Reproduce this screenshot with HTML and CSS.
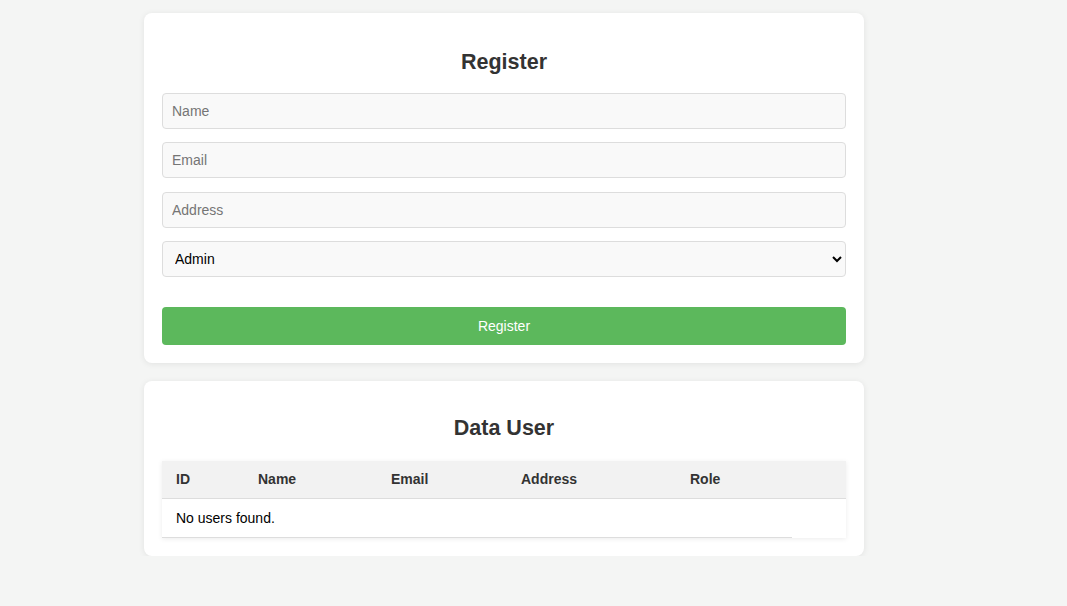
FILE: index.html
```html
<!DOCTYPE html>
<html lang="en">
<head>
<meta charset="utf-8">
<title>Register</title>
<link rel="stylesheet" href="styles.css">
</head>
<body>
<div class="container">
  <div class="card card-form">
    <h2 class="title">Register</h2>
    <form class="form">
      <input class="field" type="text" placeholder="Name">
      <input class="field" type="email" placeholder="Email">
      <input class="field" type="text" placeholder="Address">
      <select class="field select">
        <option>Admin</option>
        <option>User</option>
      </select>
      <button class="btn" type="button">Register</button>
    </form>
  </div>
  <div class="card card-table">
    <h2 class="title">Data User</h2>
    <table class="table">
      <thead>
        <tr>
          <th class="c-id">ID</th>
          <th class="c-name">Name</th>
          <th class="c-email">Email</th>
          <th class="c-addr">Address</th>
          <th class="c-role">Role</th>
          <th class="c-act"></th>
        </tr>
      </thead>
      <tbody>
        <tr>
          <td class="empty" colspan="5">No users found.</td>
          <td class="blank"></td>
        </tr>
      </tbody>
    </table>
  </div>
</div>
</body>
</html>
```

FILE: styles.css
```css
* { box-sizing: border-box; }
html, body { margin: 0; padding: 0; }
body {
  background: #f4f5f4;
  font-family: "Liberation Sans", Arial, sans-serif;
  color: #333;
}
.container {
  width: 720px;
  margin-left: 144px;
  padding-top: 13px;
  display: flex;
  flex-direction: column;
  gap: 18px;
}
.card {
  background: #fff;
  border-radius: 8px;
  box-shadow: 0 1px 6px rgba(0,0,0,0.08);
  padding: 35px 18px 18px;
}
.card-table { padding-top: 33px; }
.title {
  margin: 0 0 17px;
  font-size: 21.5px;
  line-height: 28px;
  font-weight: bold;
  text-align: center;
  color: #333;
}
.card-table .title { margin-bottom: 19px; }
.form { display: flex; flex-direction: column; }
.field {
  display: block;
  width: 100%;
  height: 36px;
  margin: 0 0 13.33px;
  padding: 0 9px;
  background: #f9f9f9;
  border: 1px solid #ddd;
  border-radius: 4px;
  font-family: "Liberation Sans", Arial, sans-serif;
  font-size: 14px;
  color: #000;
}
.field::placeholder { color: #757575; }
.select {
  margin-bottom: 30px;
  padding-left: 8px;
  color: #000;
}
.btn {
  display: block;
  width: 100%;
  height: 38px;
  background: #5cb85c;
  color: #fff;
  border: none;
  border-radius: 4px;
  font-family: "Liberation Sans", Arial, sans-serif;
  font-size: 14px;
}
.table {
  width: 100%;
  border-collapse: collapse;
  table-layout: fixed;
  box-shadow: 0 1px 5px rgba(0,0,0,0.08);
  font-size: 14px;
}
.table th {
  background: #f2f2f2;
  height: 38px;
  padding: 0 14px 2px;
  text-align: left;
  font-weight: bold;
  color: #333;
  border-bottom: 1px solid #ddd;
}
.table td {
  height: 39px;
  padding: 0 14px;
  color: #000;
}
.table td.empty { border-bottom: 1px solid #ddd; }
.c-id { width: 82px; }
.c-name { width: 133px; }
.c-email { width: 130px; }
.c-addr { width: 169px; }
.c-role { width: 116px; }
.c-act { width: 54px; }
```
